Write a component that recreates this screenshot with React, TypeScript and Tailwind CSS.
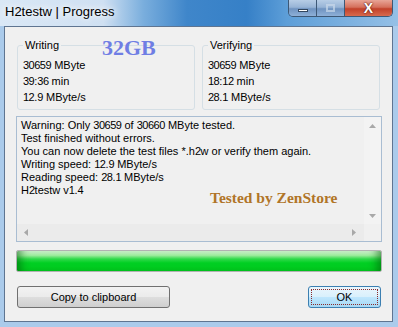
import React from "react";

const winFont = { fontFamily: '"Liberation Sans", Arial, sans-serif' };

// Segoe UI digits are a bit narrower than Arial's
function Txt({ s }: { s: string }) {
  const parts = s.split(/(\d+)/);
  return (
    <>
      {parts.map((p, i) =>
        /^\d+$/.test(p) ? (
          <span key={i} className="tracking-[-0.5px]">
            {p}
          </span>
        ) : (
          <React.Fragment key={i}>{p}</React.Fragment>
        )
      )}
    </>
  );
}

function Arrow({ dir }: { dir: "up" | "down" | "left" | "right" }) {
  const pts = {
    up: "0,4 3.5,0 7,4",
    down: "0,0 3.5,4 7,0",
    left: "4,0 0,3.5 4,7",
    right: "0,0 4,3.5 0,7",
  }[dir];
  const vert = dir === "up" || dir === "down";
  return (
    <svg width={vert ? 7 : 4} height={vert ? 4 : 7} viewBox={vert ? "0 0 7 4" : "0 0 4 7"}>
      <polygon points={pts} fill="#a8a8a8" />
    </svg>
  );
}

function Group({ title, lines }: { title: string; lines: string[] }) {
  return (
    <fieldset className="h-[73px] w-[178px] rounded-[3px] border border-[#d5dfe5] px-[5px] pb-[4px]">
      <legend className="px-[2px] text-[11px] leading-[16px] text-black">{title}</legend>
      <div className="mt-[4px] flex flex-col">
        {lines.map((l) => (
          <div key={l} className="text-[11px] leading-[16px] text-black">
            <Txt s={l} />
          </div>
        ))}
      </div>
    </fieldset>
  );
}

const log = [
  "Warning: Only 30659 of 30660 MByte tested.",
  "Test finished without errors.",
  "You can now delete the test files *.h2w or verify them again.",
  "Writing speed: 12.9 MByte/s",
  "Reading speed: 28.1 MByte/s",
  "H2testw v1.4",
];

export default function App() {
  return (
    <div
      className="relative flex h-[327px] w-[398px] flex-col overflow-hidden bg-[#abcbeb]"
      style={winFont}
    >
      {/* Title bar */}
      <div className="flex h-[26px] shrink-0 items-start bg-[linear-gradient(90deg,#dae8f6_0%,#cfe0f2_26%,#7aaedd_36%,#3f86ca_47%,#3680c7_62%,#5d9ed8_72%,#95c0e6_100%)]">
        <div className="pl-[5px] pt-[4px] text-[13px] leading-[16px] text-black [text-shadow:0_0_6px_#fff,0_0_10px_#fff]">
          H2testw | Progress
        </div>
        <div className="ml-auto mr-[5px] flex h-[17px] overflow-hidden rounded-b-[5px] border border-t-0 border-[#3d5876]">
          <div className="flex w-[28px] items-end justify-center border-r border-[#3d5876] bg-[linear-gradient(180deg,#b7cde6_0%,#97b4d6_45%,#6f93c0_55%,#8eb0d8_100%)] pb-[4px]">
            <div className="h-[3px] w-[10px] border border-[#33475f] bg-white" />
          </div>
          <div className="flex w-[28px] items-center justify-center border-r border-[#3d5876] bg-[linear-gradient(180deg,#b7cde6_0%,#97b4d6_45%,#6f93c0_55%,#8eb0d8_100%)]">
            <div className="h-[8px] w-[9px] border-2 border-[#c9d8ea] opacity-70" />
          </div>
          <div className="flex w-[47px] items-center justify-center bg-[linear-gradient(180deg,#e8a597_0%,#d5705c_45%,#c2412a_55%,#d76a4e_100%)]">
            <span className="text-[14px] font-bold leading-none text-white [text-shadow:0_0_1px_#5a1a10,0_0_2px_#5a1a10]">
              X
            </span>
          </div>
        </div>
      </div>

      {/* Client area */}
      <div className="ml-[4px] mr-[5px] mb-[5px] flex flex-1 flex-col border border-[#5f7591] bg-[#f0f0f0] pl-[11px] pr-[10px] pt-[10px] pb-[13px]">
        <div className="flex gap-[7px] px-[1px]">
          <Group title="Writing" lines={["30659 MByte", "39:36 min", "12.9 MByte/s"]} />
          <Group title="Verifying" lines={["30659 MByte", "18:12 min", "28.1 MByte/s"]} />
        </div>

        {/* Log box */}
        <div className="mt-[6px] flex h-[126px] flex-col border border-[#a9bdd2] bg-[#f0f0f0]">
          <div className="flex min-h-0 flex-1">
            <div className="flex-1 overflow-hidden pl-[4px] pt-[2px]">
              {log.map((l) => (
                <div key={l} className="whitespace-nowrap text-[11px] leading-[13px] text-black">
                  <Txt s={l} />
                </div>
              ))}
            </div>
            <div className="flex w-[17px] flex-col items-center justify-between bg-[#f3f3f3] pt-[7px] pb-[6px]">
              <Arrow dir="up" />
              <Arrow dir="down" />
            </div>
          </div>
          <div className="flex h-[17px] items-center">
            <div className="flex flex-1 items-center justify-between bg-[#ebebeb] pl-[7px] pr-[8px]">
              <div className="flex h-[17px] items-center">
                <Arrow dir="left" />
              </div>
              <Arrow dir="right" />
            </div>
            <div className="h-[17px] w-[17px] bg-[#f0f0f0]" />
          </div>
        </div>

        {/* Progress */}
        <div className="mt-[8px] h-[22px] rounded-[2px] border border-[#b2b2b2] bg-[linear-gradient(180deg,#d6f7d6_0%,#9ceb9c_22%,#2fd94a_40%,#00cf22_60%,#00c91e_100%)] shadow-[inset_10px_0_8px_-6px_rgba(0,90,10,0.55),inset_-10px_0_8px_-6px_rgba(0,90,10,0.55)]" />

        {/* Buttons */}
        <div className="mt-[14px] flex h-[22px] justify-between px-[1px]">
          <button className="w-[153px] rounded-[3px] border border-[#707070] bg-[linear-gradient(180deg,#f2f2f2_0%,#ebebeb_48%,#dddddd_52%,#cfcfcf_100%)] text-[11px] text-black">
            Copy to clipboard
          </button>
          <button className="w-[73px] rounded-[3px] border border-[#3c7fb1] bg-[linear-gradient(180deg,#eaf6fd_0%,#d9f0fc_48%,#bee6fd_52%,#a7d9f5_100%)] p-[2px] text-[11px] text-black">
            <div className="flex h-full w-full items-center justify-center border border-dotted border-[#8a2a2a]">
              OK
            </div>
          </button>
        </div>
      </div>

      {/* Watermarks */}
      <div className="absolute left-[102px] top-[37px] text-[22px] font-bold leading-[22px] text-[#6f7ee4] [font-family:'Liberation_Serif',serif]">
        32GB
      </div>
      <div className="absolute left-[210px] top-[189px] text-[15.5px] font-bold leading-[18px] text-[#b07528] [font-family:'Liberation_Serif',serif]">
        Tested by ZenStore
      </div>
    </div>
  );
}
